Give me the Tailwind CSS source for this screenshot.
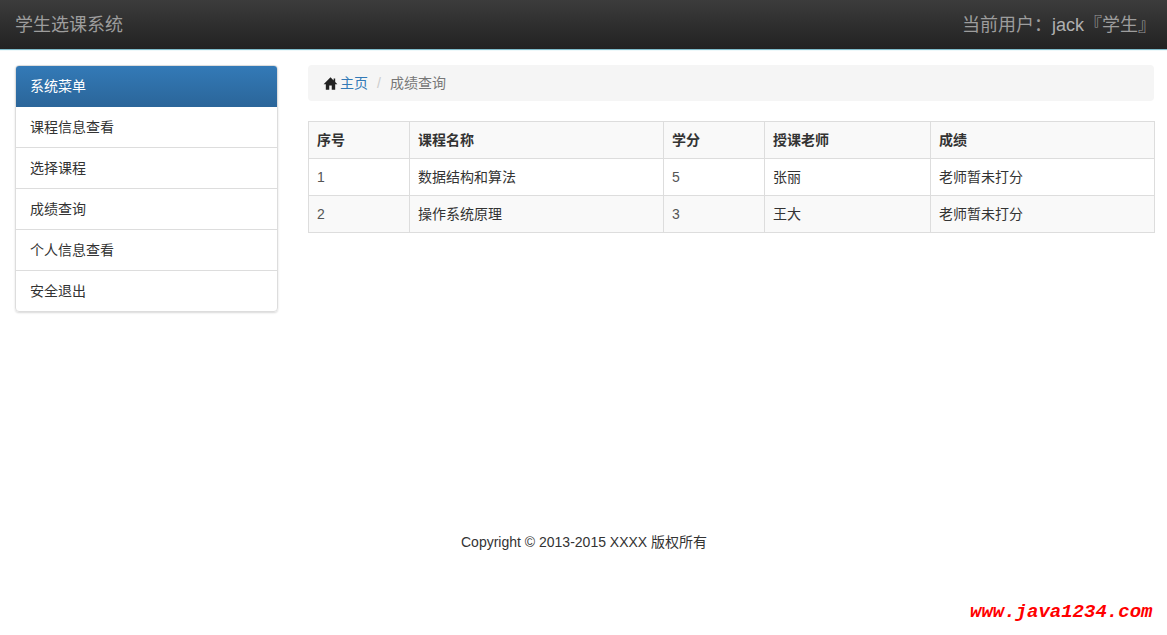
<!DOCTYPE html>
<html lang="zh">
<head>
    <meta charset="UTF-8">
    <title>学生选课系统</title>
    <script src="https://cdn.jsdelivr.net/npm/@tailwindcss/browser@4"></script>
</head>
<body class="bg-white text-[14px] leading-[20px] text-[#333] font-['Liberation_Sans','Noto_Sans_CJK_SC',sans-serif]">

    <!-- 顶部 -->
    <div class="h-[50px] flex items-center justify-between pl-[15px] pr-[11px] bg-gradient-to-b from-[#3c3c3c] to-[#222] border-b border-[#7fbccb] shadow-[0_1px_0_#eef9fb]">
        <div class="text-[18px] text-[#9d9d9d]">学生选课系统</div>
        <div class="text-[18px] text-[#9d9d9d]">当前用户：<span class="text-[#b0b0b0]">jack</span>『学生』</div>
    </div>

    <div class="flex pl-[15px] pr-[13px] pt-[15px]">
        <!-- 菜单 -->
        <div class="w-[263px] shrink-0 self-start rounded-[4px] border border-[#ddd] shadow-[0_1px_2px_rgba(0,0,0,0.15)] overflow-hidden">
            <div class="h-[42px] -mx-px -mt-px flex items-center px-[14px] text-white bg-gradient-to-b from-[#337ab7] to-[#2b669a] border border-[#2b669a]">系统菜单</div>
            <div class="h-[41px] flex items-center px-[14px] border-b border-[#ddd]">课程信息查看</div>
            <div class="h-[41px] flex items-center px-[14px] border-b border-[#ddd]">选择课程</div>
            <div class="h-[41px] flex items-center px-[14px] border-b border-[#ddd]">成绩查询</div>
            <div class="h-[41px] flex items-center px-[14px] border-b border-[#ddd]">个人信息查看</div>
            <div class="h-[40px] flex items-center px-[14px]">安全退出</div>
        </div>

        <!-- 内容 -->
        <div class="w-[846px] ml-[30px]">
            <div class="h-[36px] flex items-center px-[15px] bg-[#f5f5f5] rounded-[4px] mb-[20px]">
                <svg class="w-[15px] h-[15px] mr-[2px]" viewBox="0 0 24 24" fill="#222"><path d="M12 2 L1 13 H4.5 V22 H10 V15 H14 V22 H19.5 V13 H23 L19.5 9.5 V4 H17 V7 Z"/></svg>
                <span class="text-[#337ab7]">主页</span>
                <span class="text-[#ccc] px-[9px]">/</span>
                <span class="text-[#777]">成绩查询</span>
            </div>

            <table class="w-[846px] table-fixed border-collapse">
                <colgroup>
                    <col class="w-[101px]">
                    <col class="w-[254px]">
                    <col class="w-[101px]">
                    <col class="w-[166px]">
                    <col class="w-[224px]">
                </colgroup>
                <thead>
                    <tr class="h-[37px] font-bold bg-[#f9f9f9]">
                        <td class="border border-[#ddd] px-[8px]">序号</td>
                        <td class="border border-[#ddd] px-[8px]">课程名称</td>
                        <td class="border border-[#ddd] px-[8px]">学分</td>
                        <td class="border border-[#ddd] px-[8px]">授课老师</td>
                        <td class="border border-[#ddd] px-[8px]">成绩</td>
                    </tr>
                </thead>
                <tbody>
                    <tr class="h-[37px]">
                        <td class="border border-[#ddd] px-[8px] text-[#555]">1</td>
                        <td class="border border-[#ddd] px-[8px]">数据结构和算法</td>
                        <td class="border border-[#ddd] px-[8px] text-[#555]">5</td>
                        <td class="border border-[#ddd] px-[8px]">张丽</td>
                        <td class="border border-[#ddd] px-[8px]">老师暂未打分</td>
                    </tr>
                    <tr class="h-[37px] bg-[#f9f9f9]">
                        <td class="border border-[#ddd] px-[8px] text-[#555]">2</td>
                        <td class="border border-[#ddd] px-[8px]">操作系统原理</td>
                        <td class="border border-[#ddd] px-[8px] text-[#555]">3</td>
                        <td class="border border-[#ddd] px-[8px]">王大</td>
                        <td class="border border-[#ddd] px-[8px]">老师暂未打分</td>
                    </tr>
                </tbody>
            </table>
        </div>
    </div>

    <!-- 页脚 -->
    <div class="mt-[220px] pl-[461px]">Copyright © 2013-2015 XXXX 版权所有</div>

    <div class="absolute left-[970px] top-[602px] text-[19px] leading-[20px] font-bold italic text-[#f00] font-['Liberation_Mono',monospace]">www.java1234.com</div>
</body>
</html>
